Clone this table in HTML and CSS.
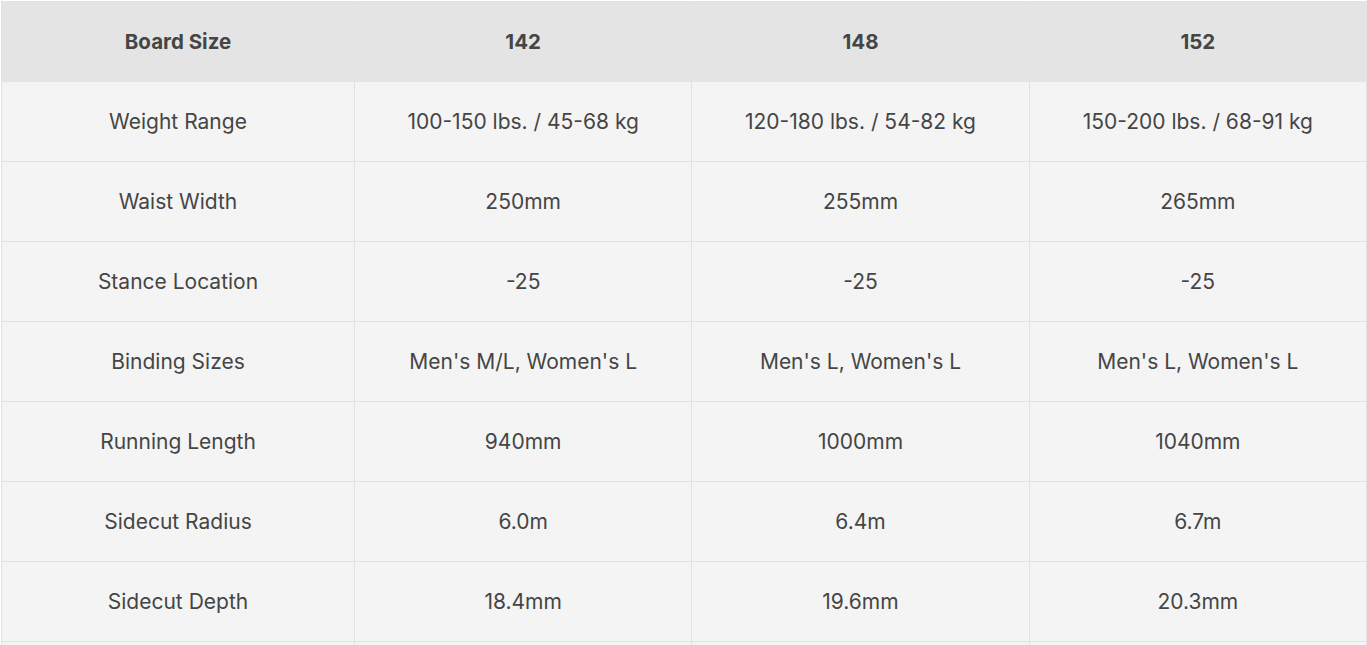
FILE: index.html
```html
<!DOCTYPE html>
<html>
<head>
<meta charset="utf-8">
<link rel="stylesheet" href="styles.css">
</head>
<body>
<table class="spec">
  <thead>
    <tr><th class="c1">Board Size</th><th>142</th><th>148</th><th>152</th></tr>
  </thead>
  <tbody>
    <tr><td>Weight Range</td><td>100-150 lbs. / 45-68 kg</td><td>120-180 lbs. / 54-82 kg</td><td>150-200 lbs. / 68-91 kg</td></tr>
    <tr><td>Waist Width</td><td>250mm</td><td>255mm</td><td>265mm</td></tr>
    <tr><td>Stance Location</td><td>-25</td><td>-25</td><td>-25</td></tr>
    <tr><td>Binding Sizes</td><td>Men's M/L, Women's L</td><td>Men's L, Women's L</td><td>Men's L, Women's L</td></tr>
    <tr><td>Running Length</td><td>940mm</td><td>1000mm</td><td>1040mm</td></tr>
    <tr><td>Sidecut Radius</td><td>6.0m</td><td>6.4m</td><td>6.7m</td></tr>
    <tr><td>Sidecut Depth</td><td>18.4mm</td><td>19.6mm</td><td>20.3mm</td></tr>
    <tr class="tail"><td></td><td></td><td></td><td></td></tr>
  </tbody>
</table>
</body>
</html>
```

FILE: styles.css
```css
html, body {
  margin: 0;
  padding: 0;
  background: #ffffff;
}
body {
  padding: 1px 0 0 1px;
  overflow: hidden;
  height: 645px;
  box-sizing: border-box;
}
.spec {
  border-collapse: collapse;
  table-layout: fixed;
  width: 1366px;
  font-family: Inter, "Liberation Sans", sans-serif;
  color: #454545;
  background: #f4f4f4;
  border: 1px solid #e2e2e2;
}
.spec th, .spec td {
  height: 80px;
  padding: 0 10px;
  box-sizing: border-box;
  text-align: center;
  vertical-align: middle;
  font-size: 21px;
  border-right: 1px solid #e2e2e2;
  border-bottom: 1px solid #e2e2e2;
}
.spec th {
  background: #e4e4e4;
  font-size: 20.5px;
  font-weight: 700;
  border-right-color: #e4e4e4;
  border-bottom: none;
}
.spec td {
  font-weight: 400;
}
.spec .c1 { width: 353px; }
```
